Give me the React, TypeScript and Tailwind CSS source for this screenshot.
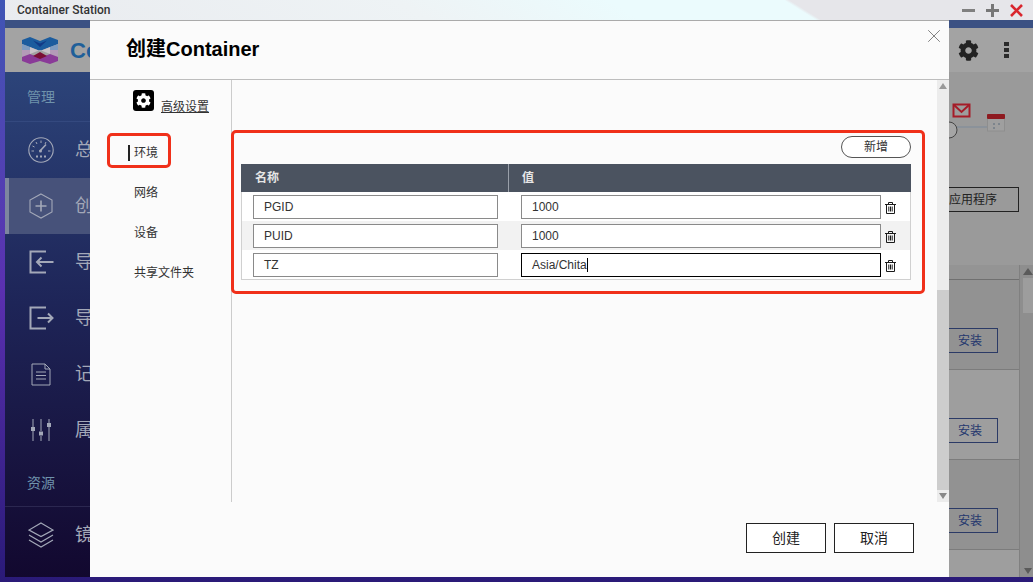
import React from 'react'
import { X } from 'lucide-react'
import { FaCog } from 'react-icons/fa'

const SANS = 'font-["Liberation_Sans","Noto_Sans_CJK_SC",sans-serif]'
const ICON = '#a3a8b8'

const Logo = () => (
    <svg width="36" height="27" viewBox="0 0 36 27" className="shrink-0">
        <path d="M0 3 L8 0 L18 4 L28 0 L36 3 L36 7 L18 14 L0 7Z" fill="#1b5c9e" />
        <path d="M11 3.5 L18 6.5 L25 3.5 L18 10Z" fill="#123a86" />
        <path d="M0 7 L8 10 L8 13 L0 13Z M36 7 L28 10 L28 13 L36 13Z" fill="#7f9cc0" />
        <path d="M0 13 L8 13 L8 17 L0 20Z M36 13 L28 13 L28 17 L36 20Z" fill="#b49ab8" />
        <path d="M8 10 L18 14 L28 10 L28 17 L18 13 L8 17Z" fill="#c9c4c9" />
        <path d="M0 20 L8 17 L18 21 L28 17 L36 20 L36 24 L28 27 L18 24 L8 27 L0 24Z" fill="#8a3a98" />
        <path d="M11 19 L18 15 L25 19 L18 22Z" fill="#7a0f35" />
    </svg>
)

const GaugeIcon = () => (
    <svg width="26" height="26" viewBox="0 0 26 26" fill="none" stroke={ICON}>
        <circle cx="13" cy="13" r="12.2" strokeWidth="1.1" />
        <path d="M13 3.5 V6 M8 5 L9 7 M18 5 L17 7 M4.5 9 L6.5 10 M3.5 14 H6 M22.5 14 H20" strokeWidth="1" />
        <path d="M12 14 L18 7.5" strokeWidth="1.6" />
        <circle cx="12.5" cy="14" r="1.5" fill={ICON} stroke="none" />
        <path d="M8 19.5 H10 M12 19.5 H14 M16 19.5 H18" strokeWidth="1.8" />
    </svg>
)

const HexPlus = () => (
    <svg width="24" height="26" viewBox="0 0 24 26" fill="none" stroke={ICON} strokeWidth="1.1">
        <path d="M12 1 L23 7 L23 19 L12 25 L1 19 L1 7Z" />
        <path d="M12 7.5 V18.5 M6.5 13 H17.5" strokeWidth="1.6" />
    </svg>
)

const ImportIcon = () => (
    <svg width="25" height="24" viewBox="0 0 25 24" fill="none" stroke={ICON} strokeWidth="2">
        <path d="M17 1.5 H1.5 V22.5 H17 M24.5 12 H8 M12.5 7.5 L8 12 L12.5 16.5" />
    </svg>
)

const ExportIcon = () => (
    <svg width="25" height="24" viewBox="0 0 25 24" fill="none" stroke={ICON} strokeWidth="2">
        <path d="M17 1.5 H1.5 V22.5 H17 M8.5 12 H23.5 M19 7.5 L23.5 12 L19 16.5" />
    </svg>
)

const LogIcon = () => (
    <svg width="20" height="23" viewBox="0 0 20 23" fill="none" stroke={ICON} strokeWidth="1">
        <path d="M1 1 H14 L19 6 V22 H1Z M14 1 V6 H19" />
        <path d="M5 9 H15 M5 12.5 H15 M5 16 H15" />
    </svg>
)

const SlidersIcon = () => (
    <svg width="20" height="24" viewBox="0 0 20 24" fill="none" stroke={ICON} strokeWidth="1">
        <path d="M2 1 V9 M2 13 V23 M10 1 V13 M10 18 V23 M18 1 V5 M18 9 V23" />
        <rect x="0.5" y="9.5" width="3" height="3" fill={ICON} />
        <rect x="8.5" y="14" width="3" height="3" fill={ICON} />
        <rect x="16.5" y="5.5" width="3" height="3" fill={ICON} />
    </svg>
)

const LayersIcon = () => (
    <svg width="26" height="26" viewBox="0 0 26 26" fill="none" stroke={ICON} strokeWidth="1.2">
        <path d="M13 1 L25 8 L13 14.5 L1 8Z M1 13 L13 20 L25 13 M1 18 L13 25 L25 18" />
    </svg>
)

const TrashIcon = () => (
    <svg width="11" height="12" viewBox="0 0 11 12" fill="none" stroke="#1a1a1a" strokeWidth="1" className="ml-[4px] mt-[2px] shrink-0">
        <path d="M0 2.5 H11 M3.5 2.5 V0.5 H7.5 V2.5 M1.5 2.5 V11.5 H9.5 V2.5 M3.8 4.5 V9.5 M5.5 4.5 V9.5 M7.2 4.5 V9.5" />
    </svg>
)

const TopIllustration = () => (
    <svg width="88" height="50" viewBox="0 0 88 50" fill="none">
        <path d="M12 32 H42" stroke="#7d8a9a" />
        <circle cx="4" cy="35" r="8" stroke="#444" strokeWidth="1" fill="#a5a5a5" />
        <rect x="8.5" y="9.5" width="16" height="12" stroke="#a51c28" strokeWidth="2" fill="#9d9d9d" />
        <path d="M9 10 L16.5 17 L24 10" stroke="#a51c28" strokeWidth="2" />
        <rect x="42.5" y="20" width="17" height="16" fill="#9f9f9f" stroke="#8e8e8e" />
        <rect x="42" y="19" width="18" height="5" rx="1" fill="#8e1a20" />
        <path d="M48 29 H50 M53 29 H55 M48 33 H50" stroke="#5b6b7a" />
    </svg>
)

const navItems = [
    { label: '总览', icon: <GaugeIcon /> },
    { label: '创建', icon: <HexPlus />, active: true },
    { label: '导入', icon: <ImportIcon /> },
    { label: '导出', icon: <ExportIcon /> },
    { label: '记录', icon: <LogIcon /> },
    { label: '属性', icon: <SlidersIcon /> },
]

const rows = [
    { name: 'PGID', value: '1000' },
    { name: 'PUID', value: '1000' },
    { name: 'TZ', value: 'Asia/Chita', focused: true },
]

const Sidebar = () => (
    <aside className="w-[85px] shrink-0 overflow-hidden whitespace-nowrap flex flex-col bg-gradient-to-b from-[#2f4a80] via-[#1e2558] to-[#12082f] text-[#a3a8b8]">
        <div className="h-[44px] bg-[#a3a3a3] flex items-center pl-[17px] gap-[12px] shrink-0">
            <Logo />
            <span className="min-w-0 overflow-hidden text-[22px] font-bold text-[#1f5f99]">Container</span>
        </div>
        <div className="h-[50px] shrink-0 pl-[22px] pt-[15px] text-[14px] leading-[20px] text-[#6f93ac] border-b border-[#34497f]">
            管理
        </div>
        {navItems.map((item) => (
            <div
                key={item.label}
                className={`h-[56px] shrink-0 flex items-center text-[18px] ${item.active ? 'bg-[#47527a] border-l-4 border-[#7d869f] pl-[18px]' : 'pl-[22px]'}`}
            >
                <span className="w-[28px] mr-[20px] flex justify-center shrink-0">{item.icon}</span>
                <span>{item.label}</span>
            </div>
        ))}
        <div className="h-[49px] shrink-0 pl-[22px] pt-[15px] text-[14px] leading-[20px] text-[#6f93ac] border-b border-[#2b2750]">资源</div>
        <div className="h-[56px] shrink-0 flex items-center pl-[22px] text-[18px]">
            <span className="w-[28px] mr-[20px] flex justify-center shrink-0"><LayersIcon /></span>
            <span>镜像</span>
        </div>
    </aside>
)

const BackgroundMain = () => (
    <main className="flex-1 min-w-0 bg-[#9a9a9a] flex flex-col">
        <div className="h-[44px] shrink-0 bg-[#a3a3a3] flex items-center justify-end pr-[24px]">
            <FaCog size={21} color="#222" />
            <div className="ml-[25px] flex flex-col gap-[2px]">
                <span className="w-[5px] h-[4px] bg-[#2a2a2a]" />
                <span className="w-[5px] h-[4px] bg-[#2a2a2a]" />
                <span className="w-[5px] h-[4px] bg-[#2a2a2a]" />
            </div>
        </div>
        <div className="mt-[23px] h-[50px] shrink-0 flex justify-end">
            <TopIllustration />
        </div>
        <div className="mt-[42px] flex justify-end pr-[14px] shrink-0">
            <div className="h-[25px] w-[200px] border border-[#222] flex items-center justify-end pr-[21px] text-[12px] text-[#222]">
                应用程序
            </div>
        </div>
        <div className="flex-1 min-h-0 flex mt-[53px]">
            <div className="flex-1 flex flex-col border-r border-[#808080]">
                <div className="h-[15px] shrink-0 bg-[#949494] border-b border-[#707070]" />
                {[0, 1, 2].map((i) => (
                    <div key={i} className={`h-[90px] shrink-0 flex items-end justify-end pr-[21px] pb-[16px] border-b border-[#7c7c7c] ${i === 1 ? 'bg-[#9e9e9e]' : 'bg-[#929292]'}`}>
                        <div className="w-[56px] h-[25px] border border-[#2b3a66] flex items-center justify-center text-[12px] text-[#25386e]">安装</div>
                    </div>
                ))}
                <div className="flex-1 bg-[#9e9e9e]" />
            </div>
            <div className="w-[13px] shrink-0 flex flex-col bg-[#8e8e8e] pl-[3px]">
                <div className="h-[13px] flex items-center justify-center">
                    <span className="border-x-[5px] border-x-transparent border-b-[7px] border-b-[#5a5a5a]" />
                </div>
                <div className="h-[35px] bg-[#9d9d9d]" />
                <div className="flex-1" />
                <div className="h-[12px] flex items-center justify-center">
                    <span className="border-x-[4px] border-x-transparent border-t-[6px] border-t-[#5a5a5a]" />
                </div>
            </div>
        </div>
    </main>
)

const ScrollBar = () => (
    <div className="w-[12px] shrink-0 flex flex-col bg-[#ececec]">
        <div className="h-[12px] shrink-0 flex items-center justify-center">
            <span className="border-x-[4px] border-x-transparent border-b-[6px] border-b-[#999]" />
        </div>
        <div className="h-[198px] shrink-0" />
        <div className="flex-1 bg-[#cdcdcd]" />
        <div className="h-[12px] shrink-0 flex items-center justify-center">
            <span className="border-x-[4px] border-x-transparent border-t-[6px] border-t-[#888]" />
        </div>
    </div>
)

const EnvTable = () => (
    <div className="ml-[9px] w-[670px]">
        <div className="h-[34px] flex justify-end items-start pt-[6px]">
            <button className="w-[70px] h-[22px] rounded-full border border-[#555] text-[12px] text-[#333] bg-white leading-none">新增</button>
        </div>
        <div className="h-[28px] bg-[#4b5360] flex text-[12px] font-bold text-[#e6e6e6]">
            <div className="w-[268px] pl-[14px] leading-[28px] border-r border-[#9aa0aa]">名称</div>
            <div className="pl-[13px] leading-[28px]">值</div>
        </div>
        <div className="border-x border-b border-[#d0d0d0]">
            {rows.map((r, i) => (
                <div key={r.name} className={`h-[29px] flex items-center ${i === 1 ? 'bg-[#f2f2f2]' : 'bg-white'}`}>
                    <div className="ml-[11px] w-[245px] h-[24px] border border-[#8a8a8a] bg-white pl-[10px] text-[12px] text-[#333] leading-[22px]">{r.name}</div>
                    <div className={`ml-[23px] w-[360px] h-[24px] border bg-white pl-[10px] text-[12px] text-[#333] leading-[22px] ${r.focused ? 'border-black' : 'border-[#8a8a8a]'}`}>
                        {r.value}
                        {r.focused && <span className="inline-block w-px h-[14px] bg-black align-middle" />}
                    </div>
                    <TrashIcon />
                </div>
            ))}
        </div>
    </div>
)

const Dialog = () => (
    <div className="absolute left-[90px] top-[20px] w-[859px] h-[557px] bg-[#fbfbfb] flex flex-col">
        <div className="h-[60px] shrink-0 border-t border-b border-t-[#aaaaaa] border-b-[#bdbdbd] relative pl-[36px] pt-[15px] text-[20px] font-bold text-black leading-[26px]">
            创建Container
            <X size={22} strokeWidth={1} color="#777" className="absolute right-[4px] top-[4px]" />
        </div>
        <div className="h-[422px] shrink-0 flex">
            <div className="w-[141px] shrink-0 relative">
                <div className="h-[41px] flex items-start pl-[43px] pt-[10px] gap-[7px]">
                    <span className="w-[21px] h-[21px] rounded-[3px] bg-black flex items-center justify-center">
                        <FaCog size={15} color="#fff" />
                    </span>
                    <span className="mt-[9px] leading-[16px] text-[12px] text-[#333] underline">高级设置</span>
                </div>
                <ul className="mt-[24px] pl-[44px] text-[12px] text-[#333] flex flex-col gap-[24px]">
                    <li className="relative leading-[16px]">
                        <span className="absolute -left-[6px] top-0 w-[2px] h-[16px] bg-[#222]" />
                        环境
                    </li>
                    <li className="leading-[16px]">网络</li>
                    <li className="leading-[16px]">设备</li>
                    <li className="leading-[16px]">共享文件夹</li>
                </ul>
                <div className="absolute left-[17px] top-[53px] w-[64px] h-[35px] rounded-[5px] border-[3px] border-[#f0301a]" />
            </div>
            <div className="flex-1 border-l border-[#cccccc] relative pt-[50px]">
                <EnvTable />
                <div className="absolute -left-px top-[50px] w-[694px] h-[164px] rounded-[5px] border-[3px] border-[#f0301a]" />
            </div>
            <ScrollBar />
        </div>
        <div className="flex-1 flex justify-end items-start gap-[8px] pr-[35px] pt-[21px]">
            <button className="w-[80px] h-[30px] border border-[#222] bg-white text-[14px] text-[#222]">创建</button>
            <button className="w-[80px] h-[30px] border border-[#222] bg-white text-[14px] text-[#222]">取消</button>
        </div>
    </div>
)

const App: React.FC = () => {
    return (
        <div className={`relative w-[1033px] h-[582px] overflow-hidden bg-gradient-to-b from-[#3f55b5] via-[#5a30b0] to-[#2a1a78] pl-[5px] ${SANS}`}>
            <div className="h-[577px] flex flex-col">
                <div className="h-[20px] shrink-0 bg-[linear-gradient(32deg,#e9ebef_0%,#eef3f5_40%,#ebfbfd_60%,#ebfbfd_76.5%,#e6e6ea_77%,#e6e6ea_100%)] flex items-center justify-between pl-[12px] pr-[10px]">
                    <span className="font-['Roboto'] font-medium text-[12px] text-[#333]">Container Station</span>
                    <div className="flex items-center gap-[11px]">
                        <svg width="13" height="13" viewBox="0 0 13 13"><path d="M0 6.5 H13" stroke="#808080" strokeWidth="3" /></svg>
                        <svg width="13" height="13" viewBox="0 0 13 13"><path d="M0 6.5 H13 M6.5 0 V13" stroke="#777" strokeWidth="3" /></svg>
                        <svg width="13" height="13" viewBox="0 0 13 13"><path d="M1 1 L12 12 M12 1 L1 12" stroke="#d9262e" strokeWidth="2.6" /></svg>
                    </div>
                </div>
                <div className="h-[8px] shrink-0 bg-[#3b5183]" />
                <div className="flex-1 min-h-0 flex overflow-hidden">
                    <Sidebar />
                    <BackgroundMain />
                </div>
            </div>
            <Dialog />
        </div>
    )
}

export default App
